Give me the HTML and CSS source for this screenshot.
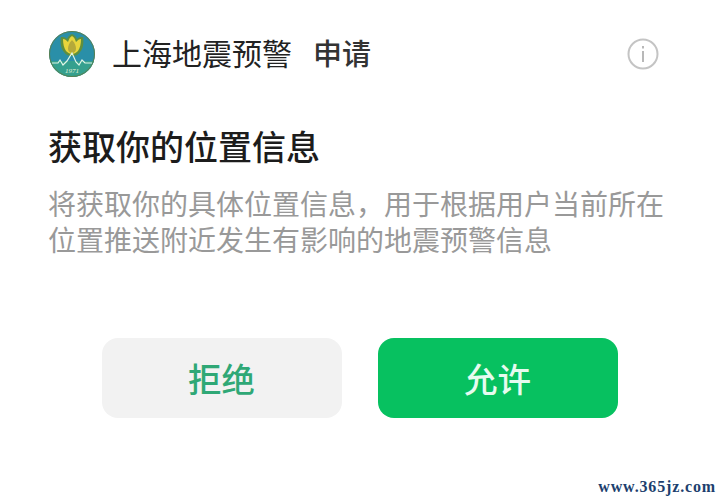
FILE: index.html
```html
<!DOCTYPE html>
<html>
  <head>
    <meta charset="UTF-8" />
    <title>位置信息</title>
    <link rel="stylesheet" href="styles.css">
  </head>
  <body>
    <div class="sheet">
      <div class="header">
        <svg class="logo" viewBox="0 0 46 46">
          <circle cx="23" cy="23" r="23" fill="#2a8fa8" />
          <path d="M1 30a23 23 0 0 0 44 0z" fill="#35a08e" />
          <circle cx="23" cy="23" r="22.5" fill="none" stroke="#5b7f4e" stroke-width="1" />
          <path d="M23 3c-3 1-4 3-5 5-2-2-4-2-6-2-1 6 0 12 3 15 2 3 5 4 8 4s6-1 8-4c3-3 4-9 3-15-2 0-4 0-6 2-1-2-2-4-5-5z" fill="#5f8f3e" />
          <path d="M23 5c-2 1-3 3-4 6-2-2-3-3-5-3 0 5 1 9 3 12 2 2 4 3 6 3s4-1 6-3c2-3 3-7 3-12-2 0-3 1-5 3-1-3-2-5-4-6z" fill="#e8d53c" />
          <path d="M23 9c-3 3-4 6-4 9 0 2 2 4 4 4s4-2 4-4c0-3-1-6-4-9z" fill="#b5a93a" />
          <path d="M3 32h6l2-3 3 5 4-4 5-8 4 9 3 3 3-5 3 3h7" fill="none" stroke="#dff5e6" stroke-width="1.2" />
          <text class="logo-year" x="23" y="42" text-anchor="middle">1971</text>
        </svg>
        <div class="app-name">上海地震预警</div>
        <div class="apply">申请</div>
        <svg class="info" viewBox="0 0 32 32">
          <circle cx="16" cy="16" r="14.5" fill="none" stroke="#c4c4c4" stroke-width="2" />
          <rect x="15" y="13" width="2" height="11" fill="#b8b8b8" />
          <rect x="15" y="8" width="2" height="2.5" fill="#b8b8b8" />
        </svg>
      </div>
      <h1 class="title">获取你的位置信息</h1>
      <p class="desc">将获取你的具体位置信息，用于根据用户当前所在<br>位置推送附近发生有影响的地震预警信息</p>
      <div class="actions">
        <div class="btn deny">拒绝</div>
        <div class="btn allow">允许</div>
      </div>
    </div>
    <div class="mark">www.365jz.com</div>
  </body>
</html>
```

FILE: styles.css
```css
html, body {
  height: 100%;
}
body {
  margin: 0;
  background: #fff;
  font-family: "Noto Sans CJK SC", "Liberation Sans", sans-serif;
  overflow: hidden;
  display: flex;
  flex-direction: column;
}
.sheet {
  flex: 1;
  padding: 31px 48px 0;
}
.header {
  display: flex;
  align-items: center;
  height: 46px;
}
.logo {
  width: 46px;
  height: 46px;
  margin-left: 1px;
  margin-right: 17px;
}
.logo-year {
  font-family: "Liberation Serif", serif;
  font-size: 7px;
  font-style: italic;
  fill: #e8f4d8;
}
.app-name {
  font-size: 30px;
  line-height: 42px;
  padding-bottom: 4px;
  color: #222;
  margin-right: 21px;
}
.apply {
  font-size: 29px;
  line-height: 42px;
  padding-bottom: 4px;
  color: #333;
  font-weight: 500;
}
.info {
  width: 32px;
  height: 32px;
  margin-left: auto;
  margin-right: 13px;
}
.title {
  margin: 49px 0 0;
  font-size: 34px;
  line-height: 40px;
  font-weight: 500;
  color: #1c1c1c;
}
.desc {
  margin: 19px 0 0;
  font-size: 28px;
  line-height: 36px;
  color: #999;
  white-space: nowrap;
}
.actions {
  display: flex;
  justify-content: center;
  gap: 36px;
  margin-top: 81px;
}
.btn {
  width: 240px;
  height: 80px;
  box-sizing: border-box;
  padding: 0 1px 2px 0;
  border-radius: 16px;
  display: flex;
  align-items: center;
  justify-content: center;
  font-size: 33.5px;
  font-weight: 500;
}
.deny {
  background: #f2f2f2;
  color: #2fa876;
}
.allow {
  background: #07c160;
  color: #e6fbef;
}
.mark {
  display: flex;
  justify-content: flex-end;
  padding: 0 4px 6px 0;
  font-family: "Liberation Serif", serif;
  font-size: 16px;
  font-weight: bold;
  letter-spacing: 0.85px;
  color: #1d3f6e;
}
```
